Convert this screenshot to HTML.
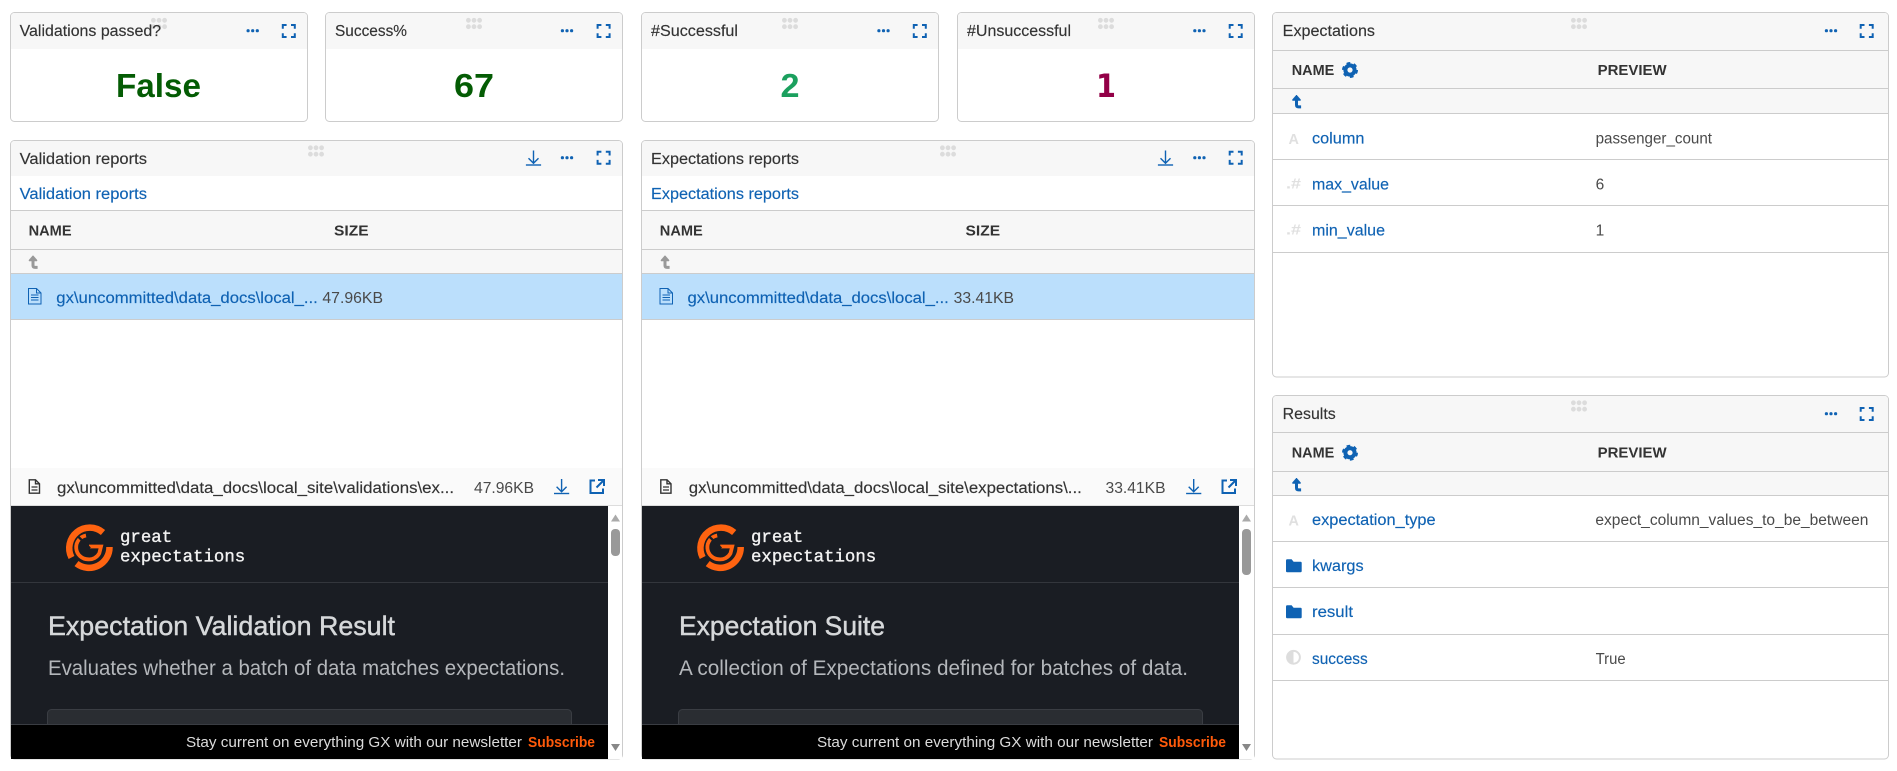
<!DOCTYPE html>
<html><head><meta charset="utf-8"><title>Validation dashboard</title>
<style>
html,body{margin:0;padding:0;background:#fff;width:1897px;height:771px;overflow:hidden}
svg{display:block;font-family:"Liberation Sans",Arial,sans-serif}
.t{font-size:15.5px;fill:#333;stroke:#333;stroke-width:.15}
.l{font-size:15.5px;fill:#0f62b3;stroke:#0f62b3;stroke-width:.15}
.h{font-size:14.5px;font-weight:bold;fill:#333}
.v{font-size:15.5px;fill:#4a4a4a}
.big{font-size:33px;font-weight:bold}
.ln{stroke:#ccc;stroke-width:1;fill:none}
.card{fill:#fff;stroke:#ccc;stroke-width:1}
.hd{fill:#f7f7f7}
.logo{font-family:"Liberation Mono",monospace;font-size:17.4px;fill:#f2f2f2;stroke:#f2f2f2;stroke-width:.35}
.ty{font-size:15px;font-weight:bold;fill:#e0e0e0}
</style></head><body>
<svg width="1897" height="771" viewBox="0 0 1897 771" xmlns="http://www.w3.org/2000/svg">
<defs>
<g id="dots"><circle cx="-4.6" cy="0" r="1.6" fill="#0f62b3"/><circle cx="0" cy="0" r="1.6" fill="#0f62b3"/><circle cx="4.6" cy="0" r="1.6" fill="#0f62b3"/></g>
<path id="fs" d="M-6 -2.2V-6H-2.2M2.2 -6H6V-2.2M6 2.2V6H2.2M-2.2 6H-6V2.2" fill="none" stroke="#0f62b3" stroke-width="2"/>
<g id="grip" fill="#dcdcdc"><circle cx="-5.6" cy="-3.2" r="2.4"/><circle cx="0" cy="-3.2" r="2.4"/><circle cx="5.6" cy="-3.2" r="2.4"/><circle cx="-5.6" cy="3.2" r="2.4"/><circle cx="0" cy="3.2" r="2.4"/><circle cx="5.6" cy="3.2" r="2.4"/></g>
<g id="dl" fill="none" stroke="#0f62b3" stroke-width="1.4"><path d="M0 -7V5.5M-5 0.8L0 5.8L5 0.8"/><path d="M-7.6 7.5H7.6"/></g>
<g id="doc" fill="none" stroke="#0f62b3" stroke-width="1"><path d="M0.5 0.5H8.5L13 5V16H0.5Z M8.5 0.5V5H13"/><path d="M3 7H10.5M3 9.5H10.5M3 12H10.5" stroke-width="1"/></g>
<g id="doc2" fill="none" stroke="#333" stroke-width="1.4"><path d="M0.8 0.8H7L11 4.8V14.2H0.8Z"/><path d="M3 8H9M3 11H9" stroke-width="1.2"/><path d="M7 0.8V4.8H11" /></g>
<path id="ext" d="M6 1.5H1.5V14H14V9.5M9 1H15V7M15 1L7.5 8.5" fill="none" stroke="#0f62b3" stroke-width="2"/>
<g id="gear"><circle r="4.6" fill="none" stroke="#0f62b3" stroke-width="4"/><circle r="6.8" fill="none" stroke="#0f62b3" stroke-width="2.4" stroke-dasharray="3.6 3.52"/></g>
<g id="up"><path d="M0 -6.5L-4 -2L-4 -1H4V-2Z" stroke-width=".5"/><path d="M0 -3V3.4Q0 5.4 2 5.4H4.6" fill="none" stroke-width="3"/></g>
<path id="folder" d="M0 1.2Q0 0 1.2 0H5.6L7.6 2.4H14.6Q15.7 2.4 15.7 3.6V11.8Q15.7 13 14.6 13H1.2Q0 13 0 11.8Z" fill="#0f62b3"/>
<g id="glogo" fill="none" stroke="#ff6310">
<path d="M103 532.5A20.5 20.5 0 0 0 71.5 557.5" stroke-width="6.5"/>
<path d="M109.5 547A20.5 20.5 0 0 1 76.5 563.6" stroke-width="6.5"/>
<path d="M86 535.5A12 12 0 0 0 88 559.3A11.5 11.5 0 0 0 99.3 553.3L101 546.5H89" stroke-width="3.8"/>
<path d="M78.3 536.7L90 548.3" stroke="#1a1d23" stroke-width="2.4"/>
</g>
</defs>

<!-- Card 1 -->
<g>
<rect class="card" x="10.5" y="12.5" width="297" height="109" rx="4"/>
<path class="hd" d="M11 49V16.5Q11 13 14.5 13H303.5Q307 13 307 16.5V49Z"/>
<use href="#grip" x="159" y="23.5"/>
<text class="t" x="19.6" y="36" textLength="141.5" lengthAdjust="spacingAndGlyphs">Validations passed?</text>
<use href="#dots" x="252.7" y="30.7"/><use href="#fs" x="288.8" y="31"/>
<text class="big" x="116" y="97" fill="#045c04" textLength="85" lengthAdjust="spacingAndGlyphs">False</text>
</g>
<!-- Card 2 -->
<g>
<rect class="card" x="325.5" y="12.5" width="297" height="109" rx="4"/>
<path class="hd" d="M326 49V16.5Q326 13 329.5 13H618.5Q622 13 622 16.5V49Z"/>
<use href="#grip" x="474" y="23.5"/>
<text class="t" x="335" y="36" textLength="72" lengthAdjust="spacingAndGlyphs">Success%</text>
<use href="#dots" x="567" y="30.7"/><use href="#fs" x="603.6" y="31"/>
<text class="big" x="454" y="97" fill="#045c04" textLength="40" lengthAdjust="spacingAndGlyphs">67</text>
</g>
<!-- Card 3 -->
<g>
<rect class="card" x="641.5" y="12.5" width="297" height="109" rx="4"/>
<path class="hd" d="M642 49V16.5Q642 13 645.5 13H934.5Q938 13 938 16.5V49Z"/>
<use href="#grip" x="790" y="23.5"/>
<text class="t" x="651" y="36" textLength="87" lengthAdjust="spacingAndGlyphs">#Successful</text>
<use href="#dots" x="883.5" y="30.7"/><use href="#fs" x="919.8" y="31"/>
<text class="big" x="780.5" y="97" fill="#1ba05e" textLength="19" lengthAdjust="spacingAndGlyphs">2</text>
</g>
<!-- Card 4 -->
<g>
<rect class="card" x="957.5" y="12.5" width="297" height="109" rx="4"/>
<path class="hd" d="M958 49V16.5Q958 13 961.5 13H1250.5Q1254 13 1254 16.5V49Z"/>
<use href="#grip" x="1106" y="23.5"/>
<text class="t" x="967" y="36" textLength="104" lengthAdjust="spacingAndGlyphs">#Unsuccessful</text>
<use href="#dots" x="1199.4" y="30.7"/><use href="#fs" x="1235.7" y="31"/>
<text x="1096" y="97" font-size="32" font-weight="bold" style="font-family:'DejaVu Sans',sans-serif" fill="#930047" textLength="20" lengthAdjust="spacingAndGlyphs">1</text>
</g>

<!-- Panel 1 -->
<g>
<rect class="card" x="10.5" y="140.5" width="612" height="618.5" rx="4"/>
<path class="hd" d="M11 176V144.5Q11 141 14.5 141H618.5Q622 141 622 144.5V176Z"/>
<text class="t" x="19.6" y="164" textLength="127.4" lengthAdjust="spacingAndGlyphs">Validation reports</text>
<use href="#grip" x="316" y="151"/>
<use href="#dl" x="533.5" y="157.5"/><use href="#dots" x="567" y="157.7"/><use href="#fs" x="603.6" y="157.7"/>
<text class="l" x="19.6" y="199" textLength="127.4" lengthAdjust="spacingAndGlyphs">Validation reports</text>
<rect class="hd" x="11" y="211" width="611" height="62"/>
<path class="ln" d="M11 210.5H622M11 249.5H622M11 273.5H622"/>
<text class="h" x="28.6" y="235.7" textLength="43" lengthAdjust="spacingAndGlyphs">NAME</text>
<text class="h" x="334" y="235.7" textLength="34.6" lengthAdjust="spacingAndGlyphs">SIZE</text>
<use href="#up" x="33" y="262" fill="#999" stroke="#999"/>
<rect x="11" y="274" width="611" height="45.5" fill="#bbdffc"/>
<path class="ln" d="M11 319.5H622"/>
<use href="#doc" x="28" y="288"/>
<text class="l" x="56.3" y="303" textLength="261.5" lengthAdjust="spacingAndGlyphs">gx\uncommitted\data_docs\local_...</text>
<text class="v" x="322.4" y="303" textLength="60.6" lengthAdjust="spacingAndGlyphs">47.96KB</text>
<rect x="11" y="468" width="611" height="37" fill="#fafafa"/>
<path d="M11 505.5H622" stroke="#ddd"/>
<use href="#doc2" x="28.5" y="479"/>
<text class="t" x="57" y="493" textLength="397" lengthAdjust="spacingAndGlyphs">gx\uncommitted\data_docs\local_site\validations\ex...</text>
<text class="v" x="474" y="493" textLength="60" lengthAdjust="spacingAndGlyphs">47.96KB</text>
<use href="#dl" x="561.6" y="486"/>
<use href="#ext" x="589" y="479"/>
<rect x="11" y="506" width="597" height="253" fill="#1a1d23"/>
<rect x="608" y="506" width="14" height="253" fill="#fff"/>
<path d="M611 521.5L615.5 514.5L620 521.5Z" fill="#aaa"/>
<rect x="611" y="529" width="9" height="27" rx="4" fill="#999"/>
<path d="M611 744L615.5 751L620 744Z" fill="#888"/>
<use href="#glogo"/>
<text class="logo" x="120" y="542">great</text>
<text class="logo" x="120" y="561.5">expectations</text>
<path d="M11 582.5H608" stroke="#33363c"/>
<text x="48" y="635" font-size="27" fill="#d6d8da" stroke="#d6d8da" stroke-width=".45" textLength="347" lengthAdjust="spacingAndGlyphs">Expectation Validation Result</text>
<text x="48" y="675" font-size="21" fill="#b4b7bb" textLength="517" lengthAdjust="spacingAndGlyphs">Evaluates whether a batch of data matches expectations.</text>
<rect x="47.5" y="709.5" width="524" height="30" rx="4" fill="#2a2d32" stroke="#3a3d43"/>
<rect x="11" y="724" width="597" height="35" fill="#000"/>
<path d="M11 724.5H608" stroke="#3a3d43"/>
<text x="186" y="747" font-size="15" fill="#dcdcdc" textLength="336" lengthAdjust="spacingAndGlyphs">Stay current on everything GX with our newsletter</text>
<text x="528" y="747" font-size="15" font-weight="bold" fill="#ff5a0a" textLength="67" lengthAdjust="spacingAndGlyphs">Subscribe</text>
</g>

<!-- Panel 2 -->
<g>
<rect class="card" x="641.5" y="140.5" width="613" height="618.5" rx="4"/>
<path class="hd" d="M642 176V144.5Q642 141 645.5 141H1250.5Q1254 141 1254 144.5V176Z"/>
<text class="t" x="651" y="164" textLength="148" lengthAdjust="spacingAndGlyphs">Expectations reports</text>
<use href="#grip" x="948" y="151"/>
<use href="#dl" x="1165.5" y="157.5"/><use href="#dots" x="1199.4" y="157.7"/><use href="#fs" x="1235.7" y="157.7"/>
<text class="l" x="651" y="199" textLength="148" lengthAdjust="spacingAndGlyphs">Expectations reports</text>
<rect class="hd" x="642" y="211" width="612" height="62"/>
<path class="ln" d="M642 210.5H1254M642 249.5H1254M642 273.5H1254"/>
<text class="h" x="659.8" y="235.7" textLength="43" lengthAdjust="spacingAndGlyphs">NAME</text>
<text class="h" x="965.5" y="235.7" textLength="34.6" lengthAdjust="spacingAndGlyphs">SIZE</text>
<use href="#up" x="665" y="262" fill="#999" stroke="#999"/>
<rect x="642" y="274" width="612" height="45.5" fill="#bbdffc"/>
<path class="ln" d="M642 319.5H1254"/>
<use href="#doc" x="659.5" y="288"/>
<text class="l" x="687.5" y="303" textLength="261.3" lengthAdjust="spacingAndGlyphs">gx\uncommitted\data_docs\local_...</text>
<text class="v" x="953.7" y="303" textLength="60.3" lengthAdjust="spacingAndGlyphs">33.41KB</text>
<rect x="642" y="468" width="612" height="37" fill="#fafafa"/>
<path d="M642 505.5H1254" stroke="#ddd"/>
<use href="#doc2" x="660" y="479"/>
<text class="t" x="688.8" y="493" textLength="393" lengthAdjust="spacingAndGlyphs">gx\uncommitted\data_docs\local_site\expectations\...</text>
<text class="v" x="1105.5" y="493" textLength="60" lengthAdjust="spacingAndGlyphs">33.41KB</text>
<use href="#dl" x="1193.7" y="486"/>
<use href="#ext" x="1221" y="479"/>
<rect x="642" y="506" width="597" height="253" fill="#1a1d23"/>
<rect x="1239" y="506" width="15" height="253" fill="#fff"/>
<path d="M1242 521.5L1246.5 514.5L1251 521.5Z" fill="#aaa"/>
<rect x="1242" y="529" width="9" height="46" rx="4" fill="#999"/>
<path d="M1242 744L1246.5 751L1251 744Z" fill="#888"/>
<use href="#glogo" x="631.2"/>
<text class="logo" x="751" y="542">great</text>
<text class="logo" x="751" y="561.5">expectations</text>
<path d="M642 582.5H1239" stroke="#33363c"/>
<text x="679" y="635" font-size="27" fill="#d6d8da" stroke="#d6d8da" stroke-width=".45" textLength="206" lengthAdjust="spacingAndGlyphs">Expectation Suite</text>
<text x="679" y="675" font-size="21" fill="#b4b7bb" textLength="509" lengthAdjust="spacingAndGlyphs">A collection of Expectations defined for batches of data.</text>
<rect x="678.5" y="709.5" width="524" height="30" rx="4" fill="#2a2d32" stroke="#3a3d43"/>
<rect x="642" y="724" width="597" height="35" fill="#000"/>
<path d="M642 724.5H1239" stroke="#3a3d43"/>
<text x="817" y="747" font-size="15" fill="#dcdcdc" textLength="336" lengthAdjust="spacingAndGlyphs">Stay current on everything GX with our newsletter</text>
<text x="1159" y="747" font-size="15" font-weight="bold" fill="#ff5a0a" textLength="67" lengthAdjust="spacingAndGlyphs">Subscribe</text>
</g>

<!-- Expectations panel -->
<g>
<rect class="card" x="1272.5" y="12.5" width="616" height="364.5" rx="4"/>
<path class="hd" d="M1273 113V16.5Q1273 13 1276.5 13H1884.5Q1888 13 1888 16.5V113Z"/>
<text class="t" x="1282.7" y="36" textLength="92.3" lengthAdjust="spacingAndGlyphs">Expectations</text>
<use href="#grip" x="1579" y="23.5"/>
<use href="#dots" x="1831" y="30.7"/><use href="#fs" x="1866.7" y="31"/>
<path class="ln" d="M1273 50.5H1888M1273 88.5H1888M1273 113.5H1888M1273 159.5H1888M1273 205.5H1888M1273 252.5H1888"/>
<text class="h" x="1291.7" y="75" textLength="42.6" lengthAdjust="spacingAndGlyphs">NAME</text>
<use href="#gear" x="1350" y="70"/>
<text class="h" x="1597.6" y="75" textLength="69" lengthAdjust="spacingAndGlyphs">PREVIEW</text>
<use href="#up" x="1296.5" y="101.5" fill="#0f62b3" stroke="#0f62b3"/>
<text class="ty" x="1288.5" y="144" textLength="10.4" lengthAdjust="spacingAndGlyphs">A</text>
<text class="l" x="1312" y="143.3" textLength="52.4" lengthAdjust="spacingAndGlyphs">column</text>
<text class="v" x="1595.6" y="143.3" textLength="116.4" lengthAdjust="spacingAndGlyphs">passenger_count</text>
<text class="ty" x="1286" y="188.5" textLength="15" lengthAdjust="spacingAndGlyphs">.#</text>
<text class="l" x="1312" y="189.3" textLength="77" lengthAdjust="spacingAndGlyphs">max_value</text>
<text class="v" x="1595.6" y="189.3">6</text>
<text class="ty" x="1286" y="234.5" textLength="15" lengthAdjust="spacingAndGlyphs">.#</text>
<text class="l" x="1312" y="235.3" textLength="73" lengthAdjust="spacingAndGlyphs">min_value</text>
<text class="v" x="1595.6" y="235.3">1</text>
</g>

<!-- Results panel -->
<g>
<rect class="card" x="1272.5" y="395.5" width="616" height="363.5" rx="4"/>
<path class="hd" d="M1273 495V399.5Q1273 396 1276.5 396H1884.5Q1888 396 1888 399.5V495Z"/>
<text class="t" x="1282.7" y="419" textLength="53" lengthAdjust="spacingAndGlyphs">Results</text>
<use href="#grip" x="1579" y="406"/>
<use href="#dots" x="1831" y="413.7"/><use href="#fs" x="1866.7" y="414"/>
<path class="ln" d="M1273 432.5H1888M1273 471.5H1888M1273 495.5H1888M1273 541.5H1888M1273 587.5H1888M1273 634.5H1888M1273 680.5H1888"/>
<text class="h" x="1291.7" y="457.7" textLength="42.6" lengthAdjust="spacingAndGlyphs">NAME</text>
<use href="#gear" x="1350" y="452.7"/>
<text class="h" x="1597.6" y="457.7" textLength="69" lengthAdjust="spacingAndGlyphs">PREVIEW</text>
<use href="#up" x="1296.5" y="484.5" fill="#0f62b3" stroke="#0f62b3"/>
<text class="ty" x="1288.5" y="525.5" textLength="10.4" lengthAdjust="spacingAndGlyphs">A</text>
<text class="l" x="1312" y="525" textLength="123.6" lengthAdjust="spacingAndGlyphs">expectation_type</text>
<text class="v" x="1595.4" y="525" textLength="273" lengthAdjust="spacingAndGlyphs">expect_column_values_to_be_between</text>
<use href="#folder" x="1286" y="559.3"/>
<text class="l" x="1312" y="571" textLength="51.6" lengthAdjust="spacingAndGlyphs">kwargs</text>
<use href="#folder" x="1286" y="605.3"/>
<text class="l" x="1312" y="617" textLength="41" lengthAdjust="spacingAndGlyphs">result</text>
<circle cx="1293.5" cy="657.3" r="6.4" fill="#fff" stroke="#ddd" stroke-width="2"/>
<path d="M1293.5 651A6.3 6.3 0 0 0 1293.5 663.6Z" fill="#ddd"/>
<text class="l" x="1312" y="664" textLength="55.7" lengthAdjust="spacingAndGlyphs">success</text>
<text class="v" x="1595.6" y="664" textLength="30" lengthAdjust="spacingAndGlyphs">True</text>
</g>
</svg>
</body></html>
